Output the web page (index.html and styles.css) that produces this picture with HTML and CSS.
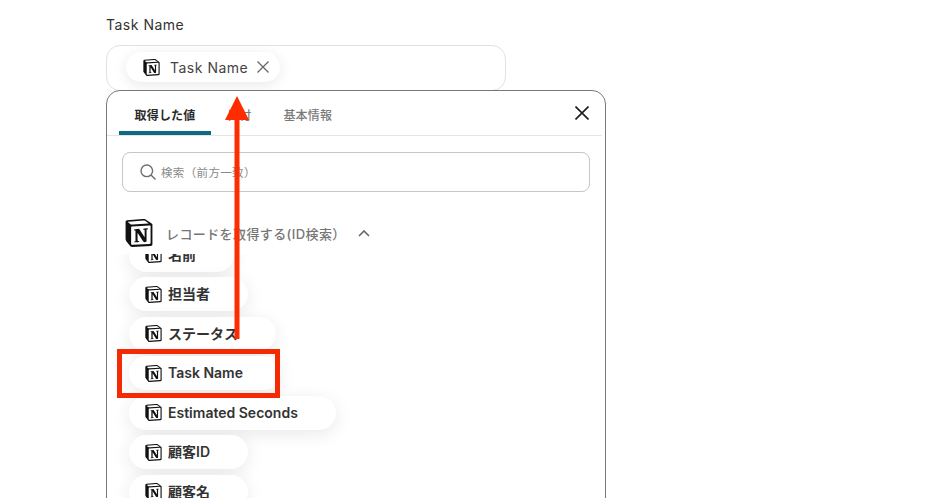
FILE: index.html
```html
<!DOCTYPE html>
<html lang="ja">
<head>
<meta charset="utf-8">
<title>Task Name</title>
<link rel="stylesheet" href="styles.css">
</head>
<body>
<svg class="defs" width="0" height="0" aria-hidden="true">
  <symbol id="notion" viewBox="0 0 24 24">
    <path d="M2 2h16l4 3v17l-17 1-3-4z" fill="#fff"/>
    <path fill="#111" d="M4.459 4.208c.746.606 1.026.56 2.428.466l13.215-.793c.28 0 .047-.28-.046-.326L17.86 1.968c-.42-.326-.981-.7-2.055-.607L3.01 2.295c-.466.046-.56.28-.374.466zm.793 3.08v13.904c0 .747.373 1.027 1.214.98l14.523-.84c.841-.046.935-.56.935-1.167V6.354c0-.606-.233-.933-.748-.887l-15.177.887c-.56.047-.747.327-.747.933zm14.337.745c.093.42 0 .84-.42.888l-.7.14v10.264c-.608.327-1.168.514-1.635.514-.748 0-.935-.234-1.495-.933l-4.577-7.186v6.952L12.21 19s0 .84-1.168.84l-3.222.186c-.093-.186 0-.653.327-.746l.84-.233V9.854L7.822 9.76c-.094-.42.14-1.026.793-1.073l3.456-.233 4.764 7.279v-6.44l-1.215-.139c-.093-.514.28-.887.747-.933zM1.936 1.035l13.31-.98c1.634-.14 2.055-.047 3.082.7l4.249 2.986c.7.513.934.653.934 1.213v16.378c0 1.026-.373 1.634-1.68 1.726l-15.458.934c-.98.047-1.448-.093-1.962-.747l-3.129-4.06c-.56-.747-.793-1.306-.793-1.96V2.667c0-.839.374-1.54 1.447-1.632z"/>
  </symbol>
</svg>

<main class="form">
  <div class="label">Task Name</div>
  <div class="field">
    <span class="tag">
      <svg class="icon"><use href="#notion"/></svg>
      <span class="tag-text">Task Name</span>
      <svg class="tag-x" viewBox="0 0 12 12"><path d="M.5.5l11 11M11.500.5l-11 11"/></svg>
    </span>
  </div>

  <section class="panel">
    <div class="tabs">
      <span class="tab active">取得した値</span>
      <span class="tab">日付</span>
      <span class="tab">基本情報</span>
      <svg class="close" viewBox="0 0 14 14"><path d="M.5.5l13 13M13.500.5l-13 13"/></svg>
    </div>
    <div class="search">
      <svg class="search-icon" viewBox="0 0 16 16"><circle cx="6.800" cy="6.800" r="5.800"/><path d="M11 11l4.500 4.500"/></svg>
      <span>検索（前方一致）</span>
    </div>
    <div class="group">
      <svg class="group-icon"><use href="#notion"/></svg>
      <span class="group-title">レコードを取得する(ID検索）</span>
      <svg class="chevron" viewBox="0 0 12 7"><path d="M1 6l5-5 5 5"/></svg>
    </div>
    <div class="list">
      <div class="chips">
        <div class="chip"><svg class="icon"><use href="#notion"/></svg>名前</div>
        <div class="chip"><svg class="icon"><use href="#notion"/></svg>担当者</div>
        <div class="chip"><svg class="icon"><use href="#notion"/></svg>ステータス</div>
        <div class="chip"><svg class="icon"><use href="#notion"/></svg>Task Name</div>
        <div class="chip"><svg class="icon"><use href="#notion"/></svg>Estimated Seconds</div>
        <div class="chip"><svg class="icon"><use href="#notion"/></svg>顧客ID</div>
        <div class="chip"><svg class="icon"><use href="#notion"/></svg>顧客名</div>
      </div>
    </div>
  </section>
</main>

<div class="highlight"></div>
<svg class="arrow" viewBox="0 0 24 243"><path d="M12 0L24 24H14.500V243H9.500V24H0z"/></svg>
</body>
</html>
```

FILE: styles.css
```css
html, body {
  margin: 0;
  height: 498px;
  overflow: hidden;
  background: #fff;
}
body {
  position: relative;
  font-family: Inter, "Noto Sans CJK JP", sans-serif;
  color: #2a2a2a;
}
.defs { position: absolute; }
.form {
  display: flex;
  flex-direction: column;
  padding-left: 106px;
  width: 500px;
}
.label {
  margin-top: 16px;
  height: 18px;
  line-height: 18px;
  font-size: 14px;
  letter-spacing: 0.5px;
  color: #333;
}
.field {
  box-sizing: border-box;
  width: 400px;
  height: 46px;
  margin-top: 11px;
  padding: 6px 0 0 19px;
  border: 1px solid #e2e2e2;
  border-radius: 14px;
}
.tag {
  display: inline-flex;
  align-items: center;
  box-sizing: border-box;
  width: 154px;
  height: 30px;
  padding-left: 17px;
  border-radius: 15px;
  background: #fff;
  box-shadow: 0 3px 14px rgba(0, 0, 0, .09);
}
.icon {
  flex: none;
  width: 17px;
  height: 17px;
}
.tag-text {
  margin-left: 10px;
  font-size: 14px;
  letter-spacing: 0.5px;
  color: #444;
}
.tag-x {
  margin-left: 9px;
  width: 12px;
  height: 12px;
  fill: none;
  stroke: #666;
  stroke-width: 1.300;
}
.panel {
  box-sizing: border-box;
  width: 500px;
  height: 460px;
  margin-top: -1px;
  border: 1px solid #787878;
  border-radius: 14px;
  background: #fff;
  position: relative;
}
.tabs {
  display: flex;
  align-items: center;
  height: 44px;
  margin-right: 3px;
  border-bottom: 1px solid #e4e4e4;
  font-size: 12px;
  font-weight: 500;
  color: #7a7a7a;
  white-space: nowrap;
}
.tab {
  display: flex;
  align-items: center;
  justify-content: center;
  box-sizing: border-box;
  height: 44px;
  padding-top: 2px;
  margin-left: 16px;
  letter-spacing: 0.2px;
}
.tab.active {
  width: 92px;
  margin-left: 12px;
  color: #2a2a2a;
  font-weight: 600;
  border-bottom: 4px solid #0d6a85;
  border-radius: 4px 4px 0 0;
  padding-top: 6px;
}
.tab + .tab + .tab {
  margin-left: 32px;
}
.close {
  margin-left: auto;
  margin-right: 13px;
  width: 14px;
  height: 14px;
  fill: none;
  stroke: #1c1c1c;
  stroke-width: 1.600;
}
.search {
  box-sizing: border-box;
  display: flex;
  align-items: center;
  gap: 5px;
  width: 468px;
  height: 40px;
  margin: 16px 0 0 15px;
  padding-left: 17px;
  border: 1px solid #c6c6c6;
  border-radius: 8px;
  font-size: 11.500px;
  letter-spacing: 0.35px;
  color: #8a8a8a;
}
.search-icon {
  width: 16px;
  height: 16px;
  fill: none;
  stroke: #6e6e6e;
  stroke-width: 1.400;
}
.group {
  display: flex;
  align-items: center;
  height: 30px;
  margin: 26px 0 0 18px;
  font-size: 13px;
  font-weight: 500;
  color: #757575;
  white-space: nowrap;
}
.group-icon {
  width: 28px;
  height: 28px;
}
.group-title {
  margin-left: 13px;
  letter-spacing: 0.4px;
}
.chevron {
  margin-left: 12px;
  width: 12px;
  height: 7px;
  fill: none;
  stroke: #666;
  stroke-width: 1.600;
}
.list {
  height: 300px;
  overflow: hidden;
  padding-left: 22px;
  margin-top: 6px;
}
.chips {
  display: flex;
  flex-direction: column;
  align-items: flex-start;
  gap: 5.500px;
  margin-top: -16.500px;
}
.chip {
  box-sizing: border-box;
  display: flex;
  align-items: center;
  gap: 6px;
  height: 34px;
  padding: 0 38px 0 16px;
  border-radius: 17px;
  background: #fff;
  box-shadow: 0 4px 18px rgba(0, 0, 0, .09);
  font-size: 14px;
  font-weight: 600;
  line-height: 1;
  color: #333;
}
.highlight {
  position: absolute;
  left: 117px;
  top: 349px;
  box-sizing: border-box;
  width: 163px;
  height: 49px;
  border: 5px solid #f52a03;
}
.arrow {
  position: absolute;
  left: 225px;
  top: 96px;
  width: 24px;
  height: 243px;
  fill: #ff2c00;
}
```
